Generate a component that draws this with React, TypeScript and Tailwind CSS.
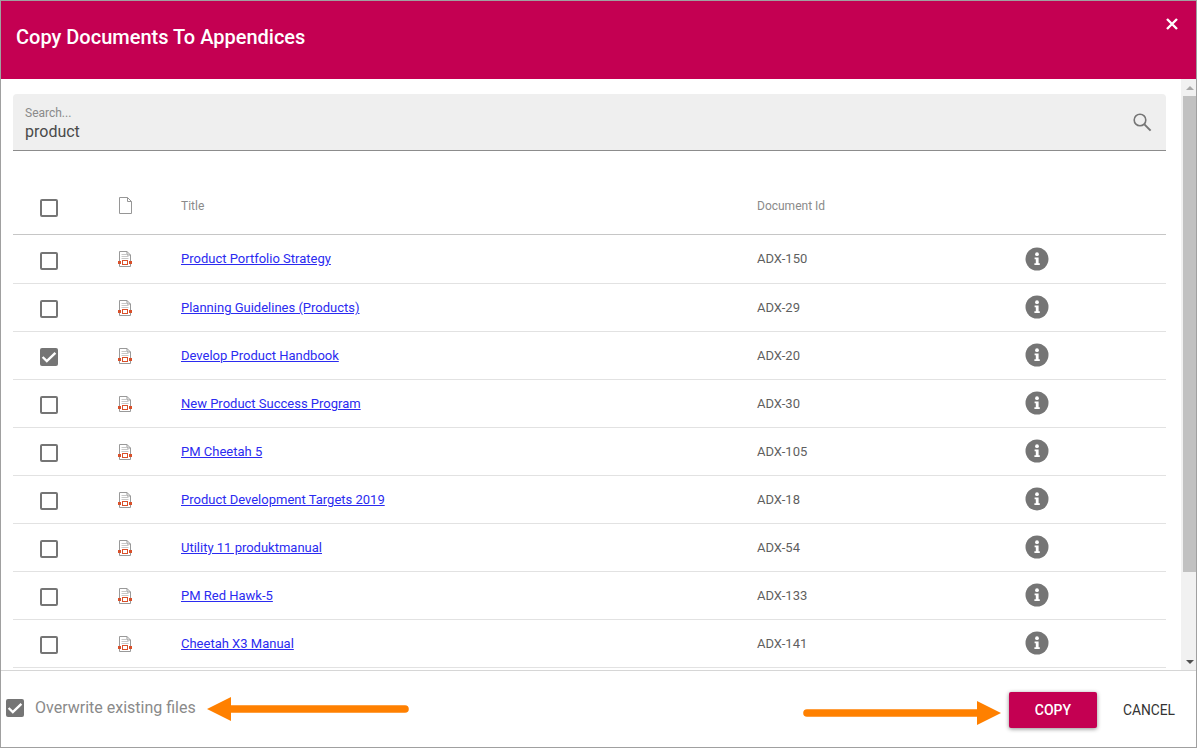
const docs = [
  { title: "Product Portfolio Strategy", id: "ADX-150", checked: false },
  { title: "Planning Guidelines (Products)", id: "ADX-29", checked: false },
  { title: "Develop Product Handbook", id: "ADX-20", checked: true },
  { title: "New Product Success Program", id: "ADX-30", checked: false },
  { title: "PM Cheetah 5", id: "ADX-105", checked: false },
  { title: "Product Development Targets 2019", id: "ADX-18", checked: false },
  { title: "Utility 11 produktmanual", id: "ADX-54", checked: false },
  { title: "PM Red Hawk-5", id: "ADX-133", checked: false },
  { title: "Cheetah X3 Manual", id: "ADX-141", checked: false },
];

function Checkbox({ checked }: { checked: boolean }) {
  if (checked) {
    return (
      <div className="w-[18px] h-[18px] rounded-[2px] bg-[#757575]">
        <svg width="18" height="18" viewBox="0 0 18 18" fill="none">
          <path d="M2.6 9 L6.8 13 L15.4 4.8" stroke="#fff" strokeWidth="2.4" />
        </svg>
      </div>
    );
  }
  return <div className="w-[18px] h-[18px] rounded-[2px] border-2 border-[#757575]" />;
}

function DocIcon() {
  return (
    <svg width="14" height="17" viewBox="0 0 14 17" fill="none">
      <path d="M1.5 .5 H9 L12.5 4 V15.5 H1.5 Z" stroke="#999999" fill="#fff" />
      <path d="M9 .5 V4 H12.5" stroke="#999999" />
      <path d="M3.5 3.5 H8 M3.5 5.5 H10.5 M3.5 7.5 H10.5" stroke="#c8c8c8" />
      <rect x="0" y="10" width="3" height="3" fill="#d9502a" />
      <rect x="11" y="10" width="3" height="3" fill="#d9502a" />
      <rect x="4.5" y="9.5" width="5" height="4" stroke="#d9502a" fill="#fff" />
    </svg>
  );
}

function InfoIcon() {
  return (
    <svg width="24" height="24" viewBox="0 0 24 24">
      <circle cx="12" cy="12" r="11.5" fill="#757575" />
      <circle cx="12" cy="7.2" r="1.9" fill="#fff" />
      <path d="M9.6 10.4 H13.6 V16.2 H14.8 V18 H9.4 V16.2 H10.8 V12.2 H9.6 Z" fill="#fff" />
    </svg>
  );
}

function Arrow({ length, flip }: { length: number; flip?: boolean }) {
  return (
    <svg width={length} height="26" viewBox={`0 0 ${length} 26`} className={flip ? "rotate-180" : ""}>
      <path d={`M0 13 L24 1 V9.2 H${length - 4} A3.8 3.8 0 0 1 ${length - 4} 16.8 H24 V25 Z`} fill="#ff8000" />
    </svg>
  );
}

export default function App() {
  return (
    <div className="w-[1197px] h-[748px] relative overflow-hidden border border-[#a0a0a0] bg-white flex flex-col font-['Roboto',sans-serif]">
      {/* Header */}
      <div className="h-[78px] shrink-0 bg-[#c40052] flex items-center pl-[15px] pb-[6px] relative">
        <h2 className="text-white text-[20px] font-medium">Copy Documents To Appendices</h2>
        <svg width="12" height="12" viewBox="0 0 12 12" className="absolute top-[17px] right-[18px]">
          <path d="M1 1 L11 11 M11 1 L1 11" stroke="#fff" strokeWidth="2.4" />
        </svg>
      </div>

      {/* Scrolling content */}
      <div className="flex-1 min-h-0 flex overflow-hidden">
        <div className="flex-1 min-w-0 pl-3 pr-[15px] pt-[15px]">
          <div className="h-[57px] bg-[#efefef] rounded-t-[4px] border-b border-[#8c8c8c] pl-3 pr-[14px] flex items-center justify-between">
            <div className="flex flex-col mt-[2px]">
              <span className="text-[12px] leading-[14px] text-[#8a8a8a]">Search...</span>
              <span className="text-[16px] leading-[19px] text-[#4a4a4a] mt-[2px]">product</span>
            </div>
            <svg width="20" height="20" viewBox="0 0 20 20" fill="none" className="mt-[-1px]">
              <circle cx="8" cy="8" r="5.8" stroke="#757575" strokeWidth="1.6" />
              <path d="M12.4 12.4 L18.6 18.6" stroke="#757575" strokeWidth="2" />
            </svg>
          </div>

          {/* Table head */}
          <div className="h-[84px] border-b border-[#c6c6c6] flex items-center text-[12px] text-[#8a8a8a] pt-[26px]">
            <div className="w-[97px] pl-[27px] shrink-0 mt-[5px]">
              <Checkbox checked={false} />
            </div>
            <div className="w-[71px] pl-[9px] shrink-0 flex mt-[-1px]">
              <svg width="13" height="17" viewBox="0 0 13 17" fill="none">
                <path d="M.5 .5 H8.5 L12.5 4.5 V16.5 H.5 Z" stroke="#969696" />
                <path d="M8.5 .5 V4.5 H12.5" stroke="#969696" />
              </svg>
            </div>
            <div className="w-[576px] shrink-0 mt-[1px]">Title</div>
            <div className="mt-[1px]">Document Id</div>
          </div>

          {/* Rows */}
          {docs.map((doc, i) => (
            <div
              key={doc.id}
              className={`h-[48px] border-b border-[#e2e2e2] flex items-center text-[13px] ${i === 0 ? "mt-[1px]" : ""}`}
            >
              <div className="w-[97px] pl-[27px] shrink-0 mt-[2px]">
                <Checkbox checked={doc.checked} />
              </div>
              <div className={`w-[71px] pl-[8px] shrink-0 flex ${i === 0 ? "mt-[-1px]" : "mt-[1px]"}`}>
                <DocIcon />
              </div>
              <div className={`w-[576px] shrink-0 ${i === 0 ? "mt-[-1px]" : "mt-[1px]"}`}>
                <a className="text-[#2b2bf0] underline">{doc.title}</a>
              </div>
              <div className={`w-[268px] shrink-0 text-[#5f5f5f] ${i === 0 ? "mt-[-1px]" : "mt-[1px]"}`}>{doc.id}</div>
              <div className="flex mt-[-2px]">
                <InfoIcon />
              </div>
            </div>
          ))}
        </div>

        {/* Scrollbar */}
        <div className="w-[15px] shrink-0 bg-[#f1f1f1] flex flex-col items-end">
          <div className="w-[13px] h-[17px] shrink-0 flex items-center justify-center">
            <div className="w-0 h-0 border-x-[4px] border-x-transparent border-b-[4px] border-b-[#a8a8a8]" />
          </div>
          <div className="w-[13px] h-[476px] bg-[#c1c1c1]" />
          <div className="flex-1" />
          <div className="w-[13px] h-[17px] shrink-0 flex items-center justify-center">
            <div className="w-0 h-0 border-x-[4px] border-x-transparent border-t-[4px] border-t-[#505050]" />
          </div>
        </div>
      </div>

      {/* Footer */}
      <div className="h-[77px] shrink-0 border-t border-[#d6d6d6] bg-white flex items-center justify-between pl-[5px] pr-[21px]">
        <div className="flex items-center gap-[11px] mt-[-2px]">
          <Checkbox checked />
          <span className="text-[16px] text-[#8a8a8a]">Overwrite existing files</span>
        </div>
        <div className="flex items-center gap-[26px] mt-[1px]">
          <button type="button" className="w-[88px] h-[36px] pt-[2px] rounded-[2px] bg-[#c40052] text-white text-[14px] font-medium shadow-[0_1px_4px_rgba(0,0,0,0.45)]">
            COPY
          </button>
          <button type="button" className="mt-[2px] text-[13.8px] text-[#333]">CANCEL</button>
        </div>
      </div>

      {/* Annotation arrows */}
      <div className="absolute left-[206px] top-[695px] flex">
        <Arrow length={202} />
      </div>
      <div className="absolute left-[802px] top-[699px] flex">
        <Arrow length={198} flip />
      </div>
    </div>
  );
}
